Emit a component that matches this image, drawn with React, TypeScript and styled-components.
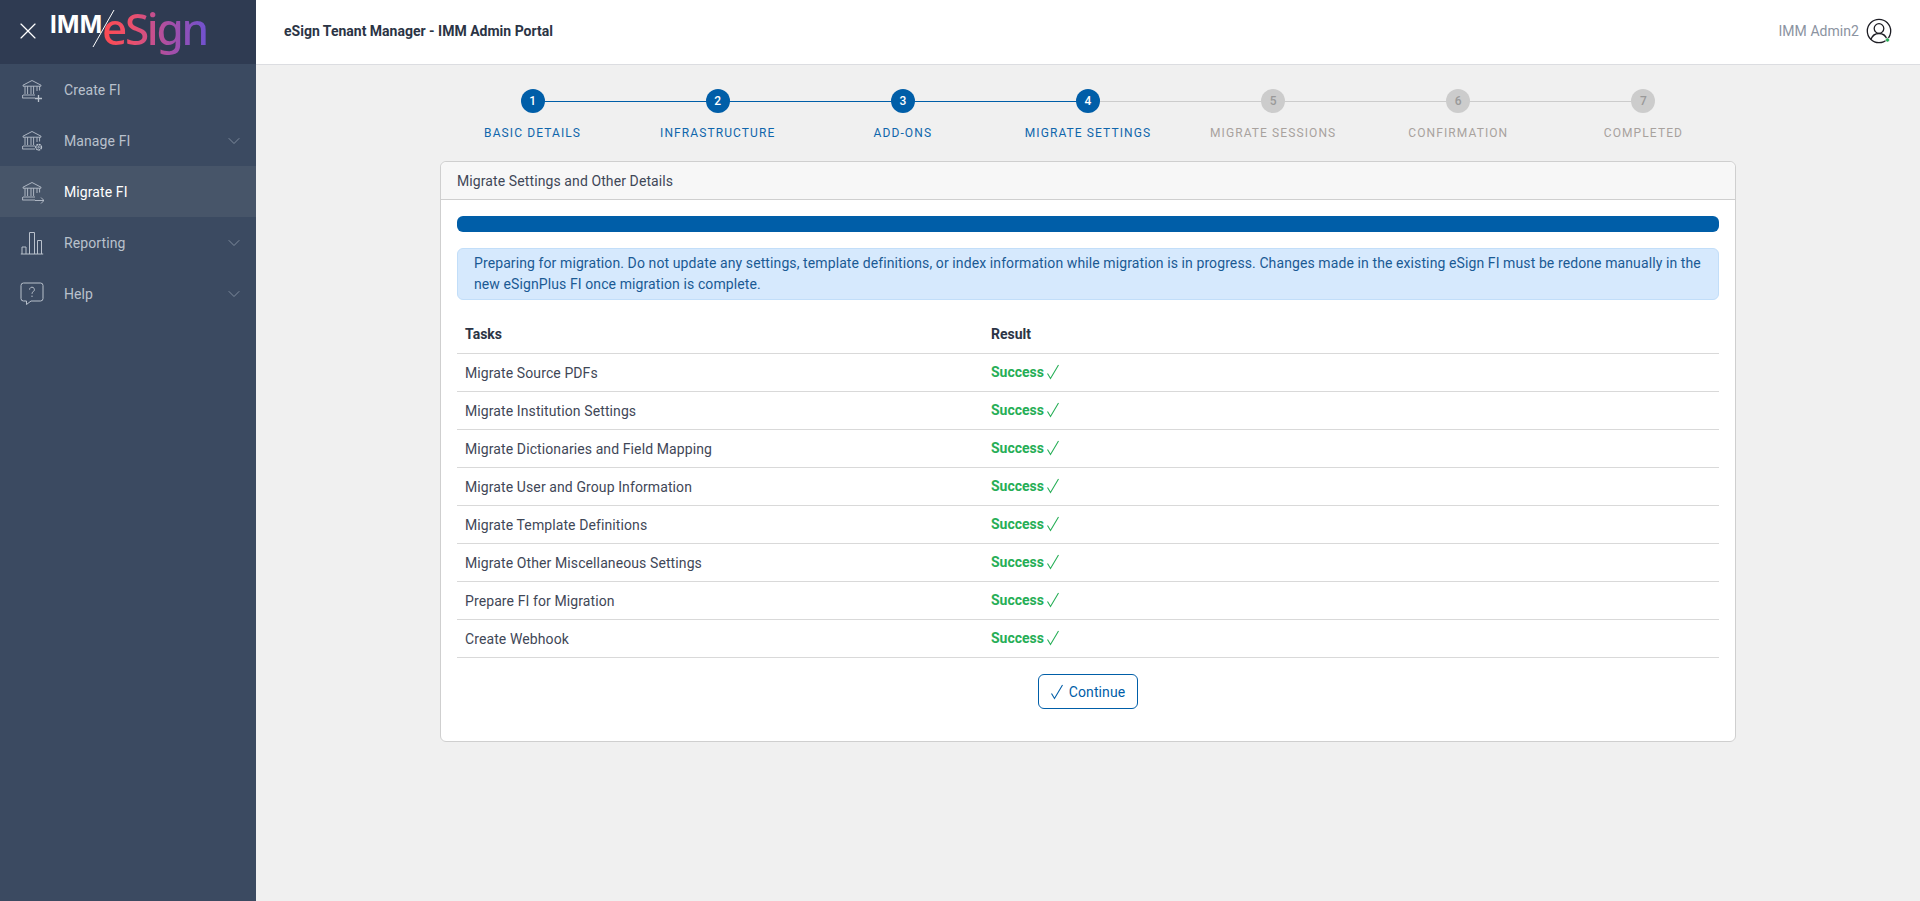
import React from "react";
import styled, { createGlobalStyle } from "styled-components";
import { ChevronDown, X } from "lucide-react";

const Global = createGlobalStyle`
  html, body { margin: 0; padding: 0; height: 100%; overflow: hidden; }
  body { font-family: Roboto, "Liberation Sans", sans-serif; font-size: 14px; color: #3a4252; background: #f0f0f0; }
  * { box-sizing: border-box; }
`;

const Page = styled.div`display: flex; height: 901px; width: 1920px;`;
const Sidebar = styled.aside`width: 256px; flex: none; background: #3b4a61; display: flex; flex-direction: column;`;
const Brand = styled.div`height: 64px; background: #2f3b52; display: flex; align-items: center; padding: 0 0 2px 14px; position: relative;`;
const CloseBtn = styled.span`display: flex; color: #fff; width: 28px;`;
const LogoWrap = styled.div`position: absolute; left: 51px; top: 0; height: 64px; width: 160px;`;
const LogoImm = styled.span`
  position: absolute; left: -1px; top: 9px; font-family: Inter, sans-serif; font-weight: 700; font-size: 24px; line-height: 32px;
  letter-spacing: 0.3px; color: #fff;
`;
const LogoSign = styled.span`
  position: absolute; left: 51px; top: 0; font-family: "Noto Sans", sans-serif; font-weight: 500; font-size: 44px; line-height: 56px; letter-spacing: -2.300px;
  background: linear-gradient(90deg, #ff4a50 0%, #e8506f 30%, #a64fa8 65%, #6f52d0 100%);
  -webkit-background-clip: text; background-clip: text; color: transparent;
`;
const LogoSlash = styled.svg`position: absolute; left: 40px; top: 8px;`;

const NavList = styled.nav`display: flex; flex-direction: column;`;
const NavItem = styled.div<{ $active?: boolean }>`
  height: 51px; display: flex; align-items: center; padding: 0 12px 0 20px;
  background: ${p => (p.$active ? "#475569" : "transparent")};
  color: ${p => (p.$active ? "#ffffff" : "#b9c1cc")};
`;
const NavIcon = styled.span`width: 24px; height: 24px; display: flex; color: #b9c1cc; margin-right: 20px;`;
const NavLabel = styled.span`flex: 1; font-size: 14px; letter-spacing: 0.1px;`;
const NavChevron = styled.span`display: flex; color: #94a0b0;`;

const Main = styled.div`flex: 1; display: flex; flex-direction: column; min-width: 0;`;
const TopBar = styled.header`
  height: 65px; background: #fff; border-bottom: 1px solid #dcdde1; display: flex; align-items: center; padding: 0 28px 2px 28px; flex: none;
`;
const Title = styled.h1`flex: 1; margin: 0; font-size: 14px; font-weight: 700; color: #2b3445;`;
const UserName = styled.span`color: #8b93a1; font-size: 14px; margin-right: 7px; letter-spacing: 0.05px;`;
const Avatar = styled.svg`display: block;`;

const Content = styled.main`width: 1296px; margin: 0 auto;`;
const Stepper = styled.ol`display: grid; grid-template-columns: repeat(7, 1fr); list-style: none; margin: 0; padding: 24px 0 0; height: 97px;`;
const Step = styled.li<{ $done: boolean; $lineDone: boolean; $last: boolean }>`
  position: relative; display: flex; flex-direction: column; align-items: center;
  &::after {
    content: ""; display: ${p => (p.$last ? "none" : "block")}; position: absolute; left: 50%; width: 100%; top: 12px; height: 1px;
    background: ${p => (p.$lineDone ? "#005ea8" : "#cccccc")};
  }
`;
const StepDot = styled.span<{ $done: boolean }>`
  position: relative; z-index: 1; width: 24px; height: 24px; border-radius: 50%; display: flex; align-items: center; justify-content: center;
  font-size: 12px; font-weight: 500;
  background: ${p => (p.$done ? "#005ea8" : "#cccccc")};
  color: ${p => (p.$done ? "#fff" : "#9a9a9a")};
`;
const StepLabel = styled.span<{ $done: boolean }>`
  margin-top: 12px; font-size: 12px; line-height: 16px; letter-spacing: 1.1px; white-space: nowrap;
  color: ${p => (p.$done ? "#0f66ac" : "#a8a29e")};
`;

const Card = styled.section`background: #fff; border: 1px solid #cfcfcf; border-radius: 6px; height: 581px; margin-top: -1px;`;
const CardHeader = styled.div`height: 38px; background: #f7f7f7; border-bottom: 1px solid #cfcfcf; border-radius: 6px 6px 0 0; padding: 0 16px; display: flex; align-items: center; font-size: 14px; letter-spacing: 0.1px; color: #3f4757;`;
const CardBody = styled.div`padding: 16px 16px 0;`;
const Progress = styled.div`height: 16px; background: #005ea8; border-radius: 6px;`;
const Alert = styled.div`
  margin-top: 16px; height: 52px; padding: 4px 16px; background: #d6e9fd; border: 1px solid #c2def9; border-radius: 6px;
  color: #1a5a94; font-size: 14px; line-height: 21px; letter-spacing: 0.1px;
`;
const Table = styled.div`margin-top: 16px;`;
const Row = styled.div<{ $head?: boolean }>`
  display: grid; grid-template-columns: 526px 1fr; align-items: center; height: 38px;
  border-bottom: 1px solid #d9d9d9; padding-top: ${p => (p.$head ? "0" : "1px")};
  font-size: 14px; color: #3f4757;
`;
const Cell = styled.div`padding: 0 8px; letter-spacing: 0.1px;`;
const HeadCell = styled(Cell)`font-weight: 700; color: #2b3445; letter-spacing: 0; margin-top: -1px;`;
const Success = styled.span`display: inline-flex; align-items: center; gap: 1px; font-weight: 700; color: #26ae56; position: relative; top: -1px; letter-spacing: 0;`;
const Actions = styled.div`display: flex; justify-content: center; margin-top: 16px;`;
const ContinueBtn = styled.button`
  width: 100px; height: 35px; border: 1px solid #005ea8; border-radius: 6px; background: #fff; color: #005ea8; font: 14px Roboto, sans-serif; letter-spacing: 0.1px;
  display: flex; align-items: center; justify-content: center; gap: 4px; padding: 0 2px 0 0;
`;

const Bank = ({ children }: { children?: React.ReactNode }) => (
  <svg width="24" height="24" viewBox="0 0 24 24" fill="none" stroke="currentColor" strokeWidth="0.9">
    <path d="M3 7.200 12 2.500l9 4.700v1H3zM5 8.300V16M7.600 8.300V16M11 8.300V16M13.600 8.300V16M17 8.300V13M19.600 8.300V12.500" />
    <path d="M3 17h12M2.600 20h12.400M2.600 17v3.200" />
    {children}
  </svg>
);
const CheckMark = ({ size, color }: { size: number; color: string }) => (
  <svg width={size} height={size} viewBox="0 0 16 16" fill="none" stroke={color} strokeWidth="1.100">
    <path d="M2.500 9.500 5.500 14.500 13.500 1" />
  </svg>
);

const icons: Record<string, React.ReactNode> = {
  create: <Bank><path d="M18.500 17v7M15 20.500h7" strokeWidth="1.300" /></Bank>,
  manage: <Bank><circle cx="18.600" cy="18.200" r="2.800" strokeWidth="1.500" strokeDasharray="2 .6" /><circle cx="18.600" cy="18.200" r=".8" /></Bank>,
  migrate: <Bank><path d="M15 20.500h9M21 17.500l3 3-3 3" /></Bank>,
  reporting: (
    <svg width="24" height="24" viewBox="0 0 24 24" fill="none" stroke="currentColor" strokeWidth="1">
      <path d="M.8 23h22.400M2 23v-7h4v7M9.500 23V1.500h5V23M17.500 23V9.500h4V23" />
    </svg>
  ),
  help: (
    <svg width="24" height="24" viewBox="0 0 24 24" fill="none" stroke="currentColor" strokeWidth="1">
      <path d="M3.500 1h17A2.500 2.500 0 0 1 23 3.500v13a2.500 2.500 0 0 1-2.500 2.500H11l-4.500 3.500V19h-3A2.500 2.500 0 0 1 1 16.500v-13A2.500 2.500 0 0 1 3.500 1z" />
      <path d="M9.600 7.600a2.400 2.400 0 1 1 3.700 2c-.9.6-1.300 1-1.300 2.200M12 13.600v1.400" />
    </svg>
  ),
};

const nav = [
  { key: "create", label: "Create FI" },
  { key: "manage", label: "Manage FI", chevron: true },
  { key: "migrate", label: "Migrate FI", active: true },
  { key: "reporting", label: "Reporting", chevron: true },
  { key: "help", label: "Help", chevron: true },
];
const steps = ["Basic Details", "Infrastructure", "Add-ons", "Migrate Settings", "Migrate Sessions", "Confirmation", "Completed"];
const tasks = [
  "Migrate Source PDFs",
  "Migrate Institution Settings",
  "Migrate Dictionaries and Field Mapping",
  "Migrate User and Group Information",
  "Migrate Template Definitions",
  "Migrate Other Miscellaneous Settings",
  "Prepare FI for Migration",
  "Create Webhook",
];

export default function App() {
  return (
    <Page>
      <Global />
      <Sidebar>
        <Brand>
          <CloseBtn><X size={28} strokeWidth={1} /></CloseBtn>
          <LogoWrap>
            <LogoImm>IMM</LogoImm>
            <LogoSlash width="26" height="42" viewBox="0 0 26 42" fill="none" stroke="#fff" strokeWidth="1"><path d="M2 39 23 2" /></LogoSlash>
            <LogoSign>eSign</LogoSign>
          </LogoWrap>
        </Brand>
        <NavList>
          {nav.map(n => (
            <NavItem key={n.key} $active={n.active}>
              <NavIcon>{icons[n.key]}</NavIcon>
              <NavLabel>{n.label}</NavLabel>
              {n.chevron && <NavChevron><ChevronDown size={20} strokeWidth={0.9} /></NavChevron>}
            </NavItem>
          ))}
        </NavList>
      </Sidebar>
      <Main>
        <TopBar>
          <Title>eSign Tenant Manager - IMM Admin Portal</Title>
          <UserName>IMM Admin2</UserName>
          <Avatar width="26" height="26" viewBox="0 0 26 26" fill="none" stroke="#1d1d24" strokeWidth="1.300">
            <circle cx="13" cy="13" r="11.700" />
            <circle cx="13" cy="10.500" r="4.800" />
            <path d="M4.800 21.500c1.500-4 4.500-6 8.200-6s6.700 2 8.200 6" />
            <circle cx="21.500" cy="22" r="2" fill="#22ac52" stroke="#fff" strokeWidth="0.6" />
          </Avatar>
        </TopBar>
        <Content>
          <Stepper>
            {steps.map((s, i) => (
              <Step key={s} $done={i < 4} $lineDone={i < 3} $last={i === 6}>
                <StepDot $done={i < 4}>{i + 1}</StepDot>
                <StepLabel $done={i < 4}>{s.toUpperCase()}</StepLabel>
              </Step>
            ))}
          </Stepper>
          <Card>
            <CardHeader>Migrate Settings and Other Details</CardHeader>
            <CardBody>
              <Progress />
              <Alert>
                Preparing for migration. Do not update any settings, template definitions, or index information while migration is in progress. Changes made in the existing eSign FI must be redone manually in the new eSignPlus FI once migration is complete.
              </Alert>
              <Table>
                <Row $head>
                  <HeadCell>Tasks</HeadCell>
                  <HeadCell>Result</HeadCell>
                </Row>
                {tasks.map(t => (
                  <Row key={t}>
                    <Cell>{t}</Cell>
                    <Cell>
                      <Success>Success<CheckMark size={16} color="#26ae56" /></Success>
                    </Cell>
                  </Row>
                ))}
              </Table>
              <Actions>
                <ContinueBtn><CheckMark size={16} color="#005ea8" />Continue</ContinueBtn>
              </Actions>
            </CardBody>
          </Card>
        </Content>
      </Main>
    </Page>
  );
}
